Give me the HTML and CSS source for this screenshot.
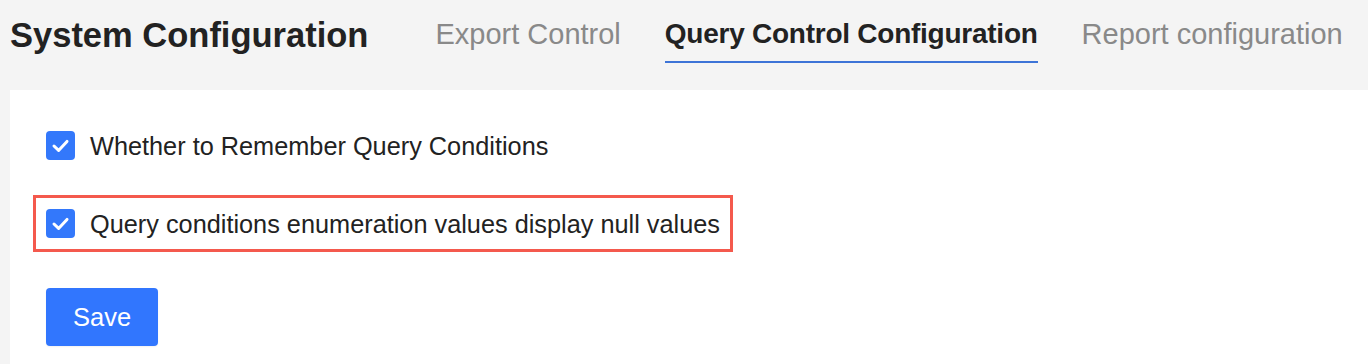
FILE: index.html
```html
<!DOCTYPE html>
<html lang="en">
<head>
<meta charset="utf-8">
<title>System Configuration</title>
<link rel="stylesheet" href="styles.css">
</head>
<body>
<div class="page">
  <header class="header">
    <h1 class="title">System Configuration</h1>
    <nav class="tabs">
      <div class="tab">Export Control</div>
      <div class="tab tab-active">Query Control Configuration</div>
      <div class="tab">Report configuration</div>
    </nav>
  </header>
  <main class="panel">
    <div class="row">
      <label class="check">
        <span class="box"><svg viewBox="0 0 29 29" width="29" height="29"><path d="M8 15 L12.6 19.4 L21 10.4" fill="none" stroke="#fff" stroke-width="3" stroke-linecap="round" stroke-linejoin="round"/></svg></span>
        <span class="label">Whether to Remember Query Conditions</span>
      </label>
    </div>
    <div class="row">
      <label class="check check-marked">
        <span class="box"><svg viewBox="0 0 29 29" width="29" height="29"><path d="M8 15 L12.6 19.4 L21 10.4" fill="none" stroke="#fff" stroke-width="3" stroke-linecap="round" stroke-linejoin="round"/></svg></span>
        <span class="label">Query conditions enumeration values display null values</span>
      </label>
    </div>
    <div class="actions">
      <button class="btn" type="button">Save</button>
    </div>
  </main>
</div>
</body>
</html>
```

FILE: styles.css
```css
* { box-sizing: border-box; }
html, body { margin: 0; padding: 0; }
body {
  background: #f4f4f4;
  font-family: "Liberation Sans", Arial, sans-serif;
  color: #262626;
}
.page {
  display: flex;
  flex-direction: column;
  min-height: 100vh;
}
.header {
  display: flex;
  align-items: flex-start;
  height: 90px;
  padding-left: 10px;
}
.title {
  margin: 15px 0 0 0;
  font-size: 34.5px;
  line-height: 40px;
  font-weight: 700;
  color: #222;
}
.tabs {
  display: flex;
  gap: 44px;
  margin-left: 67px;
}
.tab {
  margin-top: 17px;
  font-size: 29px;
  line-height: 34px;
  color: #898989;
  padding-bottom: 10px;
  border-bottom: 2px solid transparent;
  white-space: nowrap;
}
.tab-active {
  font-size: 28px;
  font-weight: 700;
  letter-spacing: -0.25px;
  color: #222;
  border-bottom-color: #3d74d7;
}
.panel {
  flex: 1;
  background: #fff;
  margin-left: 10px;
  padding: 27px 0 0 23px;
}
.row { display: flex; }
.row + .row { margin-top: 21px; }
.check {
  display: inline-flex;
  align-items: center;
  gap: 15px;
  height: 57px;
  padding: 0 10px;
  border: 3px solid transparent;
}
.check-marked { border-color: #f4594d; }
.box {
  width: 29px;
  height: 29px;
  border-radius: 4px;
  background: #3378fb;
  display: block;
}
.box svg { display: block; }
.label {
  font-size: 25.3px;
  line-height: 30px;
  color: #222;
  white-space: nowrap;
}
.actions {
  margin-top: 36px;
  padding-left: 13px;
}
.btn {
  width: 112px;
  height: 58px;
  border: 0;
  border-radius: 4px;
  background: #3176fe;
  color: #fff;
  font-family: "Liberation Sans", Arial, sans-serif;
  font-size: 25.5px;
  padding: 0;
  box-shadow: 0 1px 2px rgba(0, 0, 0, 0.06);
}
```
